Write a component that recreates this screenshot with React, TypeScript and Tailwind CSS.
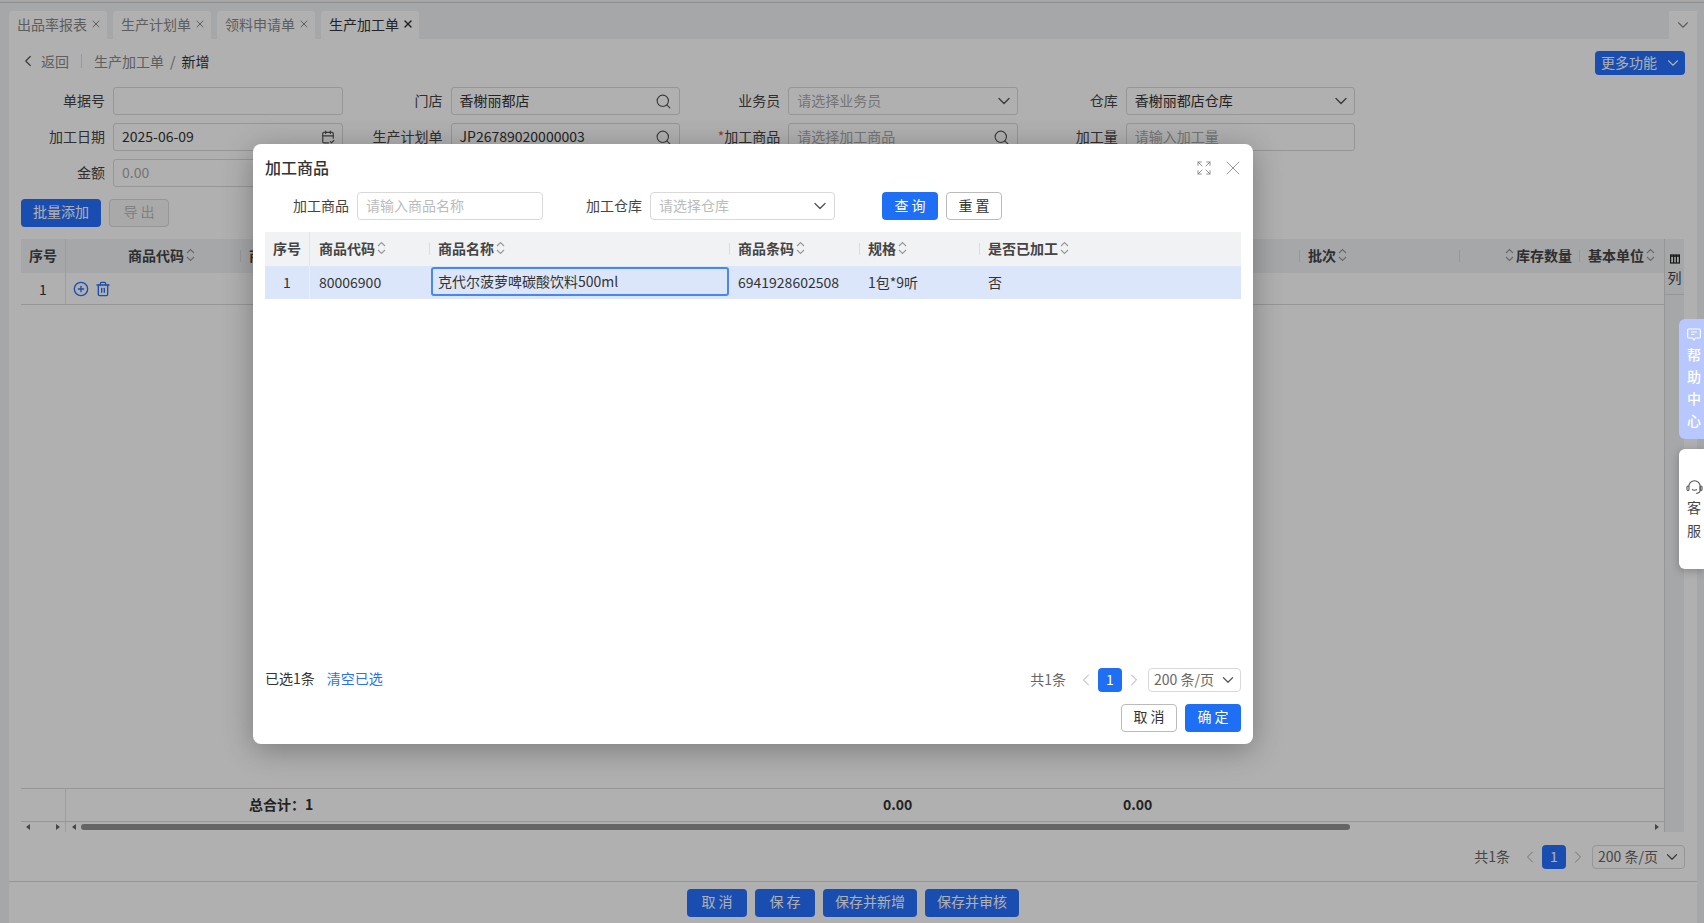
import { useState } from "react";
import {
  CalendarCheck2,
  ChevronDown,
  ChevronLeft,
  ChevronRight,
  CirclePlus,
  Expand,
  Search,
  Trash2,
  X,
} from "lucide-react";

const PRIMARY = "bg-[#2770ff]";

function SortIcon() {
  return (
    <svg width="9" height="14" viewBox="0 0 9 14" fill="none" stroke="#9a9a9a" strokeWidth="1.2" className="shrink-0">
      <path d="M1 5 L4.5 1.5 L8 5" />
      <path d="M1 9 L4.5 12.5 L8 9" />
    </svg>
  );
}

function Tab({ label, active }: { label: string; active?: boolean }) {
  return (
    <div
      className={`flex h-[28px] w-[98px] items-center gap-[3px] rounded-t-[3px] bg-white pb-[3px] pl-2 text-sm ${
        active ? "text-[#333]" : "text-[#888]"
      }`}
    >
      <span>{label}</span>
      <X size={12} strokeWidth={active ? 2.8 : 2} />
    </div>
  );
}

// Labelled form control of the background page
function Field({
  label,
  value,
  placeholder,
  icon,
  required,
}: {
  label?: string;
  value?: string;
  placeholder?: string;
  icon?: "search" | "down" | "date";
  required?: boolean;
}) {
  return (
    <div className="flex h-[28px] items-center gap-2">
      <label className="w-[96px] pb-[2px] text-right text-sm text-[#444]">
        {required && <span className="text-[#e5484d]">*</span>}
        {label}
      </label>
      <div className="flex h-[28px] w-[229.5px] items-center justify-between rounded-[3px] border border-[#d9d9d9] bg-white pl-2 pr-[3px] text-sm">
        <span className={`pb-[2px] ${value ? "text-[#333]" : "text-[#aaa]"}`}>{value ?? placeholder}</span>
        {icon === "search" && <Search size={17} strokeWidth={1.6} className="mr-[4px] text-[#555]" />}
        {icon === "down" && <ChevronDown size={20} strokeWidth={1.6} className="text-[#555]" />}
        {icon === "date" && <CalendarCheck2 size={14} className="mr-[4px] text-[#555]" />}
      </div>
    </div>
  );
}

function Pagination({ selectWidth, active }: { selectWidth: string; active: string }) {
  return (
    <div className="flex h-[24px] items-center text-sm text-[#666]">
      <span className="mr-2 pb-[2px]">共1条</span>
      <span className="flex w-[24px] justify-center">
        <ChevronLeft size={20} strokeWidth={1.2} className="text-[#aaa]" />
      </span>
      <span className={`flex h-[24px] w-[24px] items-center justify-center rounded-[4px] pb-[2px] text-white ${active}`}>1</span>
      <span className="flex w-[24px] justify-center">
        <ChevronRight size={20} strokeWidth={1.2} className="text-[#aaa]" />
      </span>
      <div
        className={`ml-[2px] flex h-[24px] items-center justify-between rounded-[4px] border border-[#d9d9d9] pl-[5px] pr-[3px] ${selectWidth}`}
      >
        <span className="pb-[2px]">200 条/页</span>
        <ChevronDown size={18} strokeWidth={1.6} className="text-[#555]" />
      </div>
    </div>
  );
}

function HeaderCell({ label, className }: { label: string; className: string }) {
  return (
    <div className={`relative flex h-full items-center gap-[2px] pb-[2px] pl-[9px] text-sm font-semibold text-[#444] ${className}`}>
      <span className="absolute left-0 top-[11px] h-[12px] w-px bg-[#dcdcdc]" />
      <span>{label}</span>
      <SortIcon />
    </div>
  );
}

function Modal() {
  return (
    <div className="absolute left-[253px] top-[144px] flex h-[600px] w-[1000px] flex-col rounded-lg bg-white px-3 shadow-[0_6px_30px_rgba(0,0,0,0.3)]">
      {/* Title */}
      <div className="flex h-[48px] shrink-0 items-center">
        <h2 className="pb-[3px] text-base font-medium text-[#333]">加工商品</h2>
        <Expand size={16} strokeWidth={1.2} className="ml-auto text-[#777]" />
        <X size={24} strokeWidth={1} className="ml-[9px] mr-[-4px] text-[#999]" />
      </div>

      {/* Query */}
      <div className="flex h-[28px] shrink-0 items-center pl-[28px] text-sm text-[#444]">
        <label className="pb-[2px]">加工商品</label>
        <div className="ml-2 flex h-[28px] w-[186px] items-center rounded-[4px] border border-[#d9d9d9] px-2 pb-[2px] text-[#bbb]">
          请输入商品名称
        </div>
        <label className="ml-[43px] pb-[2px]">加工仓库</label>
        <div className="ml-2 flex h-[28px] w-[185px] items-center justify-between rounded-[4px] border border-[#d9d9d9] pl-2 pr-[4px] text-[#bbb]">
          <span className="pb-[2px]">请选择仓库</span>
          <ChevronDown size={20} strokeWidth={1.6} className="text-[#555]" />
        </div>
        <button className="ml-[47px] h-[28px] w-[56px] rounded-[4px] bg-[#1f6ff5] pb-[3px] text-white">查 询</button>
        <button className="ml-2 h-[28px] w-[56px] rounded-[4px] border border-[#bbb] pb-[3px] text-[#333]">重 置</button>
      </div>

      {/* Table */}
      <div className="mt-3 flex h-[34px] shrink-0 bg-[#f1f2f4]">
        <div className="flex h-full w-[45px] items-center justify-center border-r border-[#e6e6e6] pb-[2px] text-sm font-semibold text-[#444]">
          序号
        </div>
        <div className="flex h-full w-[119px] items-center gap-[2px] pb-[2px] pl-[9px] text-sm font-semibold text-[#444]">
          <span>商品代码</span>
          <SortIcon />
        </div>
        <HeaderCell label="商品名称" className="w-[300px]" />
        <HeaderCell label="商品条码" className="w-[130px]" />
        <HeaderCell label="规格" className="w-[120px]" />
        <HeaderCell label="是否已加工" className="flex-1" />
      </div>
      <div className="flex h-[33px] shrink-0 items-center bg-[#dce6fa] text-sm text-[#333]">
        <div className="flex h-full w-[45px] items-center justify-center border-r border-[#e6edfb] pb-[2px]">1</div>
        <div className="w-[119px] pb-[2px] pl-[9px]">80006900</div>
        <div className="w-[300px] pb-[3px] pl-[2px] pt-[1px]">
          <div className="flex h-[29px] items-center rounded-[3px] border-2 border-[#4a86ef] pb-[2px] pl-[5px]">
            克代尔菠萝啤碳酸饮料500ml
          </div>
        </div>
        <div className="w-[130px] pb-[2px] pl-[9px]">6941928602508</div>
        <div className="w-[120px] pb-[2px] pl-[9px]">1包*9听</div>
        <div className="flex-1 pb-[2px] pl-[9px]">否</div>
      </div>

      <div className="flex-1" />

      {/* Footer */}
      <div className="flex h-[24px] shrink-0 items-center justify-between text-sm">
        <div className="flex gap-3 pb-[4px]">
          <span className="text-[#333]">已选1条</span>
          <span className="text-[#2b6ff5]">清空已选</span>
        </div>
        <Pagination selectWidth="w-[93px]" active="bg-[#1f6ff5]" />
      </div>
      <div className="mb-3 mt-3 flex shrink-0 justify-end gap-2 text-sm">
        <button className="h-[28px] w-[56px] rounded-[4px] border border-[#bbb] pb-[4px] text-[#333]">取 消</button>
        <button className="h-[28px] w-[56px] rounded-[4px] bg-[#1f6ff5] pb-[4px] text-white">确 定</button>
      </div>
    </div>
  );
}

export default function App() {
  const [tabs] = useState(["出品率报表", "生产计划单", "领料申请单"]);

  return (
    <div className="relative flex h-screen w-screen flex-col overflow-hidden bg-[#f0f2f5] font-['Noto_Sans_CJK_SC','Noto_Sans',sans-serif]">
      <div className="h-[3px] shrink-0 border-b border-[#ccc]" />
      <div className="flex min-h-0 flex-1">
        <main className="ml-[9px] mr-[7px] flex min-w-0 flex-1 flex-col">
          {/* Tabs */}
          <div className="flex h-[36px] shrink-0 items-end gap-[6px]">
            {tabs.map((t) => (
              <Tab key={t} label={t} />
            ))}
            <Tab label="生产加工单" active />
            <div className="ml-auto flex h-[28px] w-[28px] items-center justify-center bg-white">
              <ChevronDown size={18} strokeWidth={1.5} className="text-[#888]" />
            </div>
          </div>

          <div className="flex min-h-0 flex-1 flex-col bg-white">
            {/* Breadcrumb */}
            <div className="mb-3 mt-3 flex h-[24px] shrink-0 items-center pr-3 text-sm">
              <div className="flex items-center pb-[4px]">
                <ChevronLeft size={18} strokeWidth={1.6} className="ml-[10px] text-[#555]" />
                <span className="ml-[4px] text-[#888]">返回</span>
                <span className="ml-[12px] h-[14px] w-px bg-[#ddd]" />
                <span className="ml-3 text-[#888]">生产加工单</span>
                <span className="ml-[6px] text-[#888]">/</span>
                <span className="ml-[6px] text-[#333]">新增</span>
              </div>
              <button className={`ml-auto flex h-[24px] w-[90px] items-center justify-between rounded-[4px] pl-[6px] pr-[3px] text-white ${PRIMARY}`}>
                <span className="pb-[2px]">更多功能</span>
                <ChevronDown size={18} strokeWidth={1.5} />
              </button>
            </div>

            {/* Form */}
            <div className="grid shrink-0 grid-cols-[repeat(4,334px)] gap-x-[3.6px] gap-y-2">
              <Field label="单据号" />
              <Field label="门店" value="香榭丽都店" icon="search" />
              <Field label="业务员" placeholder="请选择业务员" icon="down" />
              <Field label="仓库" value="香榭丽都店仓库" icon="down" />
              <Field label="加工日期" value="2025-06-09" icon="date" />
              <Field label="生产计划单" value="JP26789020000003" icon="search" />
              <Field label="加工商品" placeholder="请选择加工商品" icon="search" required />
              <Field label="加工量" placeholder="请输入加工量" />
              <Field label="金额" placeholder="0.00" />
            </div>

            {/* Actions */}
            <div className="ml-3 mt-3 flex shrink-0 gap-2 text-sm">
              <button className={`h-[28px] w-[80px] rounded-[4px] pb-[4px] text-white ${PRIMARY}`}>批量添加</button>
              <button className="h-[28px] w-[60px] rounded-[4px] border border-[#d9d9d9] bg-[#f5f5f5] pb-[4px] text-[#bbb]">导 出</button>
            </div>

            {/* Table */}
            <div className="ml-3 mr-[13px] mt-3 flex min-h-0 flex-1">
              <div className="flex min-w-0 flex-1 flex-col border-r border-[#d9d9d9]">
                <div className="flex h-[34px] shrink-0 items-center bg-[#f0f2f5] text-sm font-semibold text-[#444]">
                  <div className="flex h-full w-[45px] items-center justify-center border-r border-[#e4e4e4] pb-[2px]">序号</div>
                  <div className="flex h-full w-[174px] items-center gap-[2px] pb-[2px] pl-[62px]">
                    <span>商品代码</span>
                    <SortIcon />
                  </div>
                  <HeaderCell label="商" className="w-[1059px]" />
                  <HeaderCell label="批次" className="w-[160px]" />
                  <div className="relative flex h-full w-[120px] items-center justify-end gap-[2px] pb-[2px] pr-[7px]">
                    <span className="absolute left-0 top-[11px] h-[12px] w-px bg-[#dcdcdc]" />
                    <SortIcon />
                    <span>库存数量</span>
                  </div>
                  <HeaderCell label="基本单位" className="flex-1" />
                </div>
                <div className="flex h-[32px] shrink-0 items-center border-b border-[#d9d9d9] text-sm text-[#333]">
                  <div className="flex h-full w-[45px] items-center justify-center border-r border-[#e4e4e4]">1</div>
                  <CirclePlus size={16} strokeWidth={2} className="ml-[7px] text-[#2770ff]" />
                  <Trash2 size={16} strokeWidth={2} className="ml-[6px] text-[#2770ff]" />
                </div>
                <div className="flex-1" />
                <div className="flex h-[33px] shrink-0 items-center border-t border-[#d9d9d9] text-sm font-semibold text-[#333]">
                  <div className="h-full w-[45px] border-r border-[#e4e4e4]" />
                  <span className="ml-[183px] w-[634px] pb-[2px]">总合计：1</span>
                  <span className="w-[240px] pb-[2px]">0.00</span>
                  <span className="pb-[2px]">0.00</span>
                </div>
                <div className="flex h-[11px] shrink-0 items-center border-t border-[#d9d9d9]">
                  <div className="flex h-full w-[45px] items-center justify-between border-r border-[#e4e4e4] px-[5px] text-[#666]">
                    <svg width="4" height="6" viewBox="0 0 4 6" fill="currentColor"><path d="M4 0 L0 3 L4 6z" /></svg>
                    <svg width="4" height="6" viewBox="0 0 4 6" fill="currentColor"><path d="M0 0 L4 3 L0 6z" /></svg>
                  </div>
                  <svg width="4" height="6" viewBox="0 0 4 6" fill="#666" className="ml-[6px]"><path d="M4 0 L0 3 L4 6z" /></svg>
                  <div className="ml-[5px] h-[6px] w-[1269px] rounded-full bg-[#939393]" />
                  <svg width="4" height="6" viewBox="0 0 4 6" fill="#666" className="ml-auto mr-[5px]"><path d="M0 0 L4 3 L0 6z" /></svg>
                </div>
              </div>
              <div className="flex w-[19px] shrink-0 flex-col items-center bg-[#f0f2f5] pt-[15px] text-sm text-[#444]">
                <svg width="10" height="10" viewBox="0 0 10 10" fill="none" stroke="#222" strokeWidth="1.2">
                  <rect x="0.6" y="1" width="8.8" height="8" />
                  <path d="M3.6 1 V9 M6.4 1 V9 M0.6 2.2 H9.4" />
                </svg>
                <span className="mt-[3px] leading-[20px]">列</span>
                <div className="mt-[7px] h-px w-full bg-[#d9d9d9]" />
              </div>
            </div>

            {/* Pagination */}
            <div className="mr-[12px] mt-[13px] flex shrink-0 justify-end">
              <Pagination selectWidth="w-[93px]" active={PRIMARY} />
            </div>

            {/* Bottom bar */}
            <div className="mt-3 flex h-[42px] shrink-0 justify-center gap-2 border-t border-[#d9d9d9] pt-[7px] text-sm text-white">
              <button className={`h-[28px] w-[60px] rounded-[4px] pb-[4px] ${PRIMARY}`}>取 消</button>
              <button className={`h-[28px] w-[60px] rounded-[4px] pb-[4px] ${PRIMARY}`}>保 存</button>
              <button className={`h-[28px] w-[94px] rounded-[4px] pb-[4px] ${PRIMARY}`}>保存并新增</button>
              <button className={`h-[28px] w-[94px] rounded-[4px] pb-[4px] ${PRIMARY}`}>保存并审核</button>
            </div>
          </div>
        </main>
      </div>

      {/* Mask and dialog */}
      <div className="absolute inset-0 bg-black/[0.31]" />
      <Modal />

      {/* Side tabs stay above the mask */}
      <div className="absolute right-0 top-[319px] flex h-[120px] w-[25px] flex-col rounded-l-md bg-[#b8c8ff] pl-2 pt-[9px] text-sm font-medium leading-[22px] text-white">
        <svg width="14" height="13" viewBox="0 0 14 13" fill="none" stroke="white" strokeWidth="1.1" className="mb-[2px]">
          <path d="M1.5 1 H12.5 Q13.3 1 13.3 2 V9 Q13.3 10 12.5 10 H8.5 L7 12 L5.5 10 H1.5 Q0.7 10 0.7 9 V2 Q0.7 1 1.5 1 Z" />
          <path d="M4 4 H10 M4 6.5 H7.5" />
        </svg>
        <span>帮</span>
        <span>助</span>
        <span>中</span>
        <span>心</span>
      </div>
      <div className="absolute right-0 top-[449px] flex h-[120px] w-[25px] flex-col rounded-l-md bg-white pl-2 pt-[30px] text-sm leading-[23px] text-[#444] shadow-[0_2px_8px_rgba(0,0,0,0.25)]">
        <svg width="17" height="17" viewBox="0 0 17 17" fill="none" stroke="#555" strokeWidth="1.1" className="ml-[-1px]">
          <path d="M2.8 7.5 a5.7 5.7 0 0 1 11.4 0 V11 q0 3 -4 3.5" />
          <rect x="1" y="7" width="2" height="4.5" rx="1" />
          <rect x="14" y="7" width="2" height="4.5" rx="1" />
          <path d="M6 10.5 q2.5 1.4 5 0" />
        </svg>
        <span>客</span>
        <span>服</span>
      </div>
    </div>
  );
}
